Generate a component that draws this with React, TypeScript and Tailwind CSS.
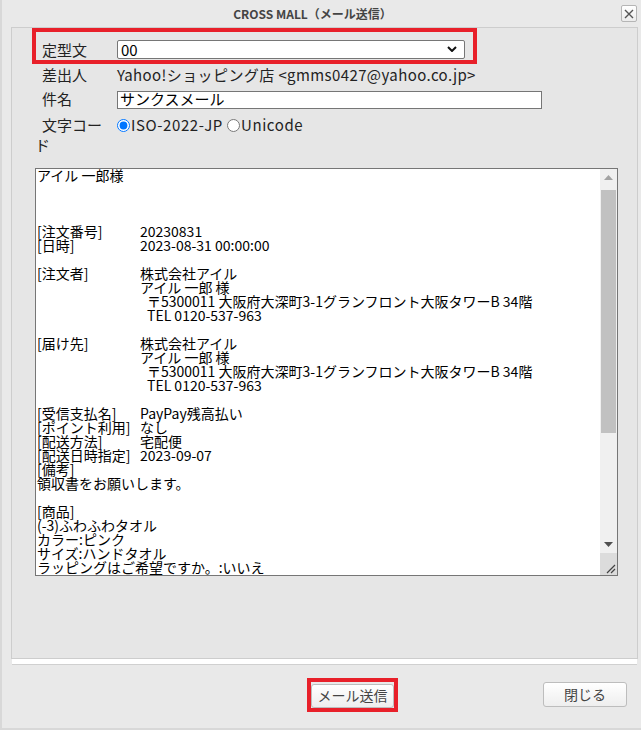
import React from "react"

type Line = { text?: string; label?: string; value?: string; indent?: boolean }

const mailLines: Line[] = [
    { text: "アイル 一郎様" },
    {},
    {},
    {},
    { label: "[注文番号]", value: "20230831" },
    { label: "[日時]", value: "2023-08-31 00:00:00" },
    {},
    { label: "[注文者]", value: "株式会社アイル" },
    { label: "", value: "アイル 一郎 様" },
    { label: "", value: "〒5300011 大阪府大深町3-1グランフロント大阪タワーB 34階", indent: true },
    { label: "", value: "TEL 0120-537-963", indent: true },
    {},
    { label: "[届け先]", value: "株式会社アイル" },
    { label: "", value: "アイル 一郎 様" },
    { label: "", value: "〒5300011 大阪府大深町3-1グランフロント大阪タワーB 34階", indent: true },
    { label: "", value: "TEL 0120-537-963", indent: true },
    {},
    { label: "[受信支払名]", value: "PayPay残高払い" },
    { label: "[ポイント利用]", value: "なし" },
    { label: "[配送方法]", value: "宅配便" },
    { label: "[配送日時指定]", value: "2023-09-07" },
    { text: "[備考]" },
    { text: "領収書をお願いします。" },
    {},
    { text: "[商品]" },
    { text: "(-3)ふわふわタオル" },
    { text: "カラー:ピンク" },
    { text: "サイズ:ハンドタオル" },
    { text: "ラッピングはご希望ですか。:いいえ" },
]

const Scrollbar = () => (
    <div className="flex w-[17px] shrink-0 flex-col bg-[#f0f0f0]">
        <div className="flex h-[17px] items-center justify-center">
            <svg width="9" height="5" viewBox="0 0 9 5">
                <path d="M0 5L4.5 0L9 5Z" fill="#a3a3a3" />
            </svg>
        </div>
        <div className="mx-[1px] mt-[4px] h-[243px] bg-[#c1c1c1]" />
        <div className="flex-1" />
        <div className="flex h-[17px] items-center justify-center">
            <svg width="9" height="5" viewBox="0 0 9 5">
                <path d="M0 0L4.5 5L9 0Z" fill="#505050" />
            </svg>
        </div>
        <div className="flex h-[22px] items-end justify-end bg-[#dcdcdc] pb-[1px] pr-[1px]">
            <svg width="12" height="12" viewBox="0 0 12 12">
                <path d="M11 3L3 11M11 7L7 11" stroke="#444" strokeWidth="1.2" />
            </svg>
        </div>
    </div>
)

const MailBody = () => (
    <div className="mt-[13px] flex h-[408px] w-[583px] border border-[#767676] bg-white">
        <div className="flex-1 overflow-hidden pl-[1px] pt-[2px] text-[14px] text-black">
            {mailLines.map((line, i) => (
                <div key={i} className="flex h-[14px] whitespace-pre leading-[9px]">
                    {line.label !== undefined ? (
                        <>
                            <span className="w-[103px] shrink-0">{line.label}</span>
                            <span className={line.indent ? "pl-[7px]" : ""}>{line.value}</span>
                        </>
                    ) : (
                        <span>{line.text ?? ""}</span>
                    )}
                </div>
            ))}
        </div>
        <Scrollbar />
    </div>
)

const App = () => {
    return (
        <div className="flex h-[730px] w-[641px] flex-col border-b-2 border-l-2 border-[#d8d8d8] bg-[#e9e9e9] font-['Noto_Sans_CJK_JP',sans-serif] text-[#222]">
            {/* title bar */}
            <div className="relative flex h-[27px] shrink-0 items-center justify-center pr-[18px] text-[12px] font-bold text-[#444]">
                CROSS MALL（メール送信）
                <button className="absolute right-[4px] top-[5px] flex h-[17px] w-[16px] items-center justify-center rounded-[2px] border border-[#b5b5b5] bg-linear-to-b from-white to-[#ececec]">
                    <svg width="10" height="10" viewBox="0 0 10 10">
                        <path d="M1 1L9 9M9 1L1 9" stroke="#555" strokeWidth="1.4" />
                    </svg>
                </button>
            </div>

            {/* form panel */}
            <div className="relative ml-[9px] mr-[3px] h-[632px] shrink-0 border border-[#cdcdcd] bg-[#e6e6e6] pl-[23px] pt-[10px]">
                <div className="pointer-events-none absolute left-[20px] top-[0px] h-[36px] w-[445px] border-4 border-[#e8202a]" />

                <div className="flex h-[24px] items-center text-[15px]">
                    <div className="w-[78px] shrink-0 indent-[7px]">定型文</div>
                    <div className="relative ml-[4px]">
                        <select className="h-[19px] w-[348px] appearance-none rounded-[2px] border border-[#767676] bg-white pl-[3px] text-[15px] leading-[17px] text-black">
                            <option>00</option>
                        </select>
                        <svg className="pointer-events-none absolute right-[8px] top-[7px]" width="10" height="6" viewBox="0 0 10 6">
                            <path d="M1 1L5 5L9 1" fill="none" stroke="#111" strokeWidth="2" />
                        </svg>
                    </div>
                </div>

                <div className="flex h-[27px] items-center text-[15px]">
                    <div className="w-[78px] shrink-0 indent-[7px]">差出人</div>
                    <div className="ml-[4px] tracking-[0.4px]">Yahoo!ショッピング店 &lt;gmms0427@yahoo.co.jp&gt;</div>
                </div>

                <div className="flex h-[21px] items-center text-[15px]">
                    <div className="w-[78px] shrink-0 indent-[7px]">件名</div>
                    <input
                        className="ml-[4px] h-[18px] w-[425px] border border-[#767676] bg-white pl-[2px] text-[15px] text-black"
                        defaultValue="サンクスメール"
                    />
                </div>

                <div className="mt-[5px] flex items-start text-[15px] leading-[20px]">
                    <div className="w-[78px] shrink-0 indent-[7px]">文字コード</div>
                    <div className="ml-[4px] flex h-[20px] items-center">
                        <input type="radio" name="charset" defaultChecked className="m-0 h-[13px] w-[13px]" />
                        <span className="ml-[1px] tracking-[0.6px]">ISO-2022-JP</span>
                        <input type="radio" name="charset" className="m-0 ml-[4px] h-[13px] w-[13px]" />
                        <span className="ml-[1px] tracking-[0.6px]">Unicode</span>
                    </div>
                </div>

                <MailBody />
            </div>
            <div className="ml-[10px] mr-[4px] h-[6px] shrink-0 border-b border-[#d0d0d0] bg-white" />

            {/* buttons */}
            <div className="flex pt-[17px]">
                <div className="relative ml-[309px]">
                    <button className="h-[24px] w-[83px] rounded-[3px] border border-[#bdbdbd] bg-linear-to-b from-white to-[#eeeeee] text-[14px] text-[#444]">
                        メール送信
                    </button>
                    <div className="pointer-events-none absolute -inset-[4px] border-4 border-[#e8202a]" />
                </div>
                <button className="ml-auto mr-[14px] h-[25px] w-[84px] rounded-[3px] border border-[#bdbdbd] bg-linear-to-b from-white to-[#eeeeee] text-[14px] text-[#444]">
                    閉じる
                </button>
            </div>
        </div>
    )
}

export default App
